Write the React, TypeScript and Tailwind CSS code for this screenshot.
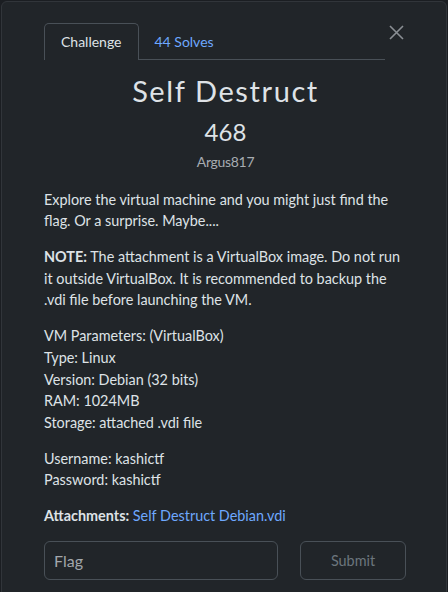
const CloseIcon = () => (
  <svg width="15" height="15" viewBox="0 0 15 15" fill="none" stroke="currentColor" strokeWidth="1.6">
    <path d="M1 1L14 14M14 1L1 14" />
  </svg>
);

const Tabs = () => {
  return (
    <div className="flex items-start">
      <ul className="flex flex-1 border-b border-[#495057]">
        <li className="-mb-px rounded-t-[5px] border border-b-0 border-[#495057] bg-[#212529] px-4 pt-[7px] pb-[8px] text-[14px] leading-[21px] text-[#dee2e6]">
          Challenge
        </li>
        <li className="px-4 pt-[8px] pb-[7px] text-[14px] leading-[21px] text-[#6ea8fe]">
          44 Solves
        </li>
      </ul>
      <button className="flex w-[22px] justify-center pt-[2px] text-[#8a8f94]">
        <CloseIcon />
      </button>
    </div>
  );
};

const App = () => {
  const params = [
    "VM Parameters: (VirtualBox)",
    "Type: Linux",
    "Version: Debian (32 bits)",
    "RAM: 1024MB",
    "Storage: attached .vdi file",
  ];

  return (
    <div className="min-h-[592px] bg-[#1b1e22] pt-px font-['Lato','Noto_Sans',sans-serif]">
      <div className="ml-px h-[600px] w-[446px] rounded-md border border-[#31353a] bg-[#212529] pt-[21px] pl-[42px] pr-[39px]">
        <Tabs />

        <h3 className="mt-[14px] text-center text-[29px] font-normal tracking-[1.6px] leading-[1.2] text-[#dee2e6]">
          Self Destruct
        </h3>
        <h4 className="mt-[9px] text-center text-[24px] leading-[1.2] text-[#dee2e6]">468</h4>
        <div className="mt-[4px] text-center text-[14px] leading-[21px] tracking-[-0.3px] text-[#a7acb1]">Argus817</div>

        <div className="mt-[17px] text-[14.4px] leading-[21.6px] text-[#dee2e6]">
          <p className="mb-[14.4px]">
            Explore the virtual machine and you might just find the flag. Or a surprise. Maybe....
          </p>
          <p className="mb-[14.4px]">
            <strong className="font-bold">NOTE:</strong> The attachment is a VirtualBox image. Do not run it
            outside VirtualBox. It is recommended to backup the .vdi file before launching the VM.
          </p>
          <p className="mb-[14.4px]">
            {params.map((line, i) => (
              <span key={i} className="block">
                {line}
              </span>
            ))}
          </p>
          <p className="mb-[14.4px]">
            <span className="block">Username: kashictf</span>
            <span className="block">Password: kashictf</span>
          </p>
          <p className="mb-[14.4px]">
            <strong className="font-bold">Attachments:</strong>{" "}
            <a className="text-[#6ea8fe]">Self Destruct Debian.vdi</a>
          </p>
        </div>

        <div className="grid grid-cols-[234px_106px] gap-[22px]">
          <input
            className="h-[39px] rounded-md border border-[#495057] bg-transparent px-[9px] text-[16px] text-[#dee2e6] outline-none placeholder:text-[#a2a7ac]"
            placeholder="Flag"
          />
          <button className="h-[39px] rounded-md border border-[#495057] text-[14.4px] text-[#6c757d]">
            Submit
          </button>
        </div>
      </div>
    </div>
  );
};

export default App;
